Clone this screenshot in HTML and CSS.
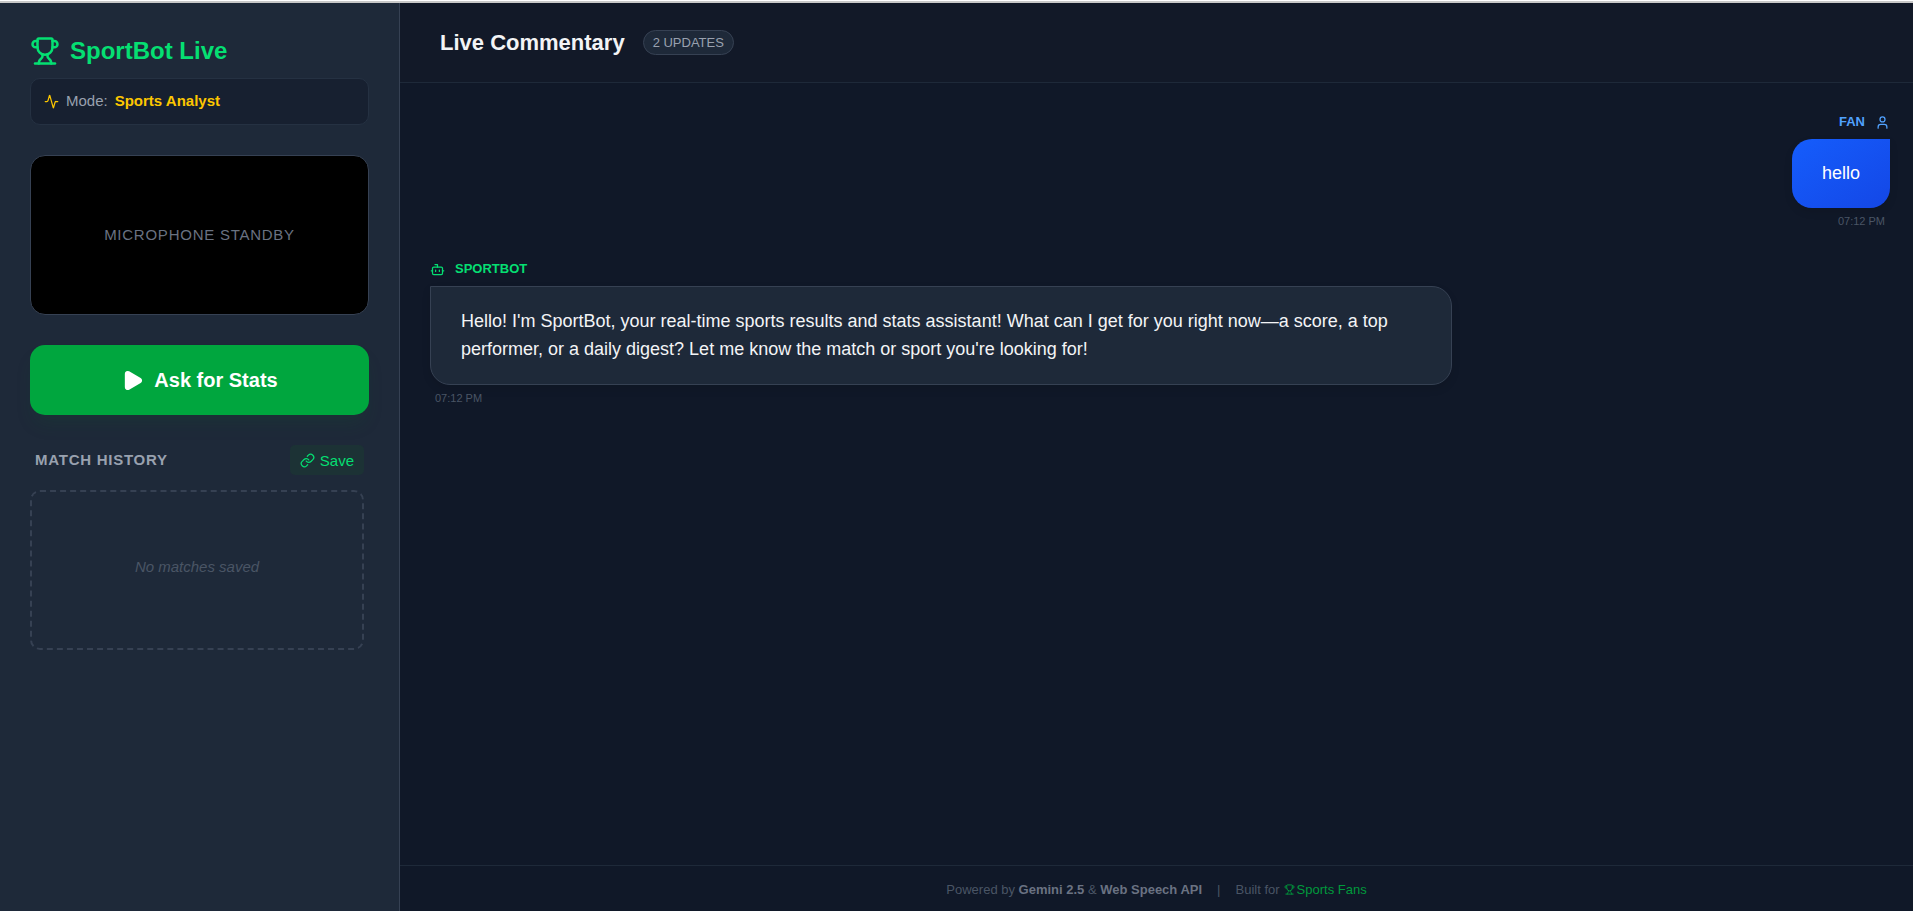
FILE: index.html
```html
<!DOCTYPE html>
<html lang="en">
<head>
    <meta charset="UTF-8" />
    <meta name="viewport" content="width=device-width, initial-scale=1.0" />
    <title>SportBot Live</title>
    <link rel="stylesheet" href="styles.css">
</head>
<body>
<svg class="sprite" aria-hidden="true">
    <symbol id="trophy" viewBox="0 0 24 24">
        <path d="M10 14.66v1.626a2 2 0 0 1-.976 1.696A5 5 0 0 0 7 21.978" />
        <path d="M14 14.66v1.626a2 2 0 0 0 .976 1.696A5 5 0 0 1 17 21.978" />
        <path d="M18 9h1.5a1 1 0 0 0 0-5H18" />
        <path d="M4 22h16" />
        <path d="M6 9a6 6 0 0 0 12 0V3a1 1 0 0 0-1-1H7a1 1 0 0 0-1 1z" />
        <path d="M6 9H4.5a1 1 0 0 1 0-5H6" />
    </symbol>
</svg>
<div class="app">
    <aside class="sidebar">
        <div class="brand-block">
            <h1 class="brand">
                <svg class="icon icon-lg"><use href="#trophy" /></svg>
                SportBot Live
            </h1>
            <div class="mode">
                <svg class="icon mode-icon" viewBox="0 0 24 24"><path d="M22 12h-2.480a2 2 0 0 0-1.930 1.460l-2.350 8.360a.25.25 0 0 1-.48 0L9.240 2.180a.25.25 0 0 0-.48 0l-2.350 8.360A2 2 0 0 1 4.490 12H2" /></svg>
                <span>Mode:</span>
                <strong>Sports Analyst</strong>
            </div>
        </div>

        <div class="visualizer">Microphone standby</div>

        <button class="ask" type="button">
            <svg class="icon icon-play" viewBox="0 0 24 24"><path d="M5 5a2 2 0 0 1 3.008-1.728l11.997 6.998a2 2 0 0 1 .003 3.458l-12 7A2 2 0 0 1 5 19z" /></svg>
            Ask for Stats
        </button>

        <section class="history">
            <div class="history-header">
                <h2>Match History</h2>
                <button class="save" type="button">
                    <svg class="icon" viewBox="0 0 24 24">
                        <path d="M10 13a5 5 0 0 0 7.540.540l3-3a5 5 0 0 0-7.070-7.070l-1.720 1.710" />
                        <path d="M14 11a5 5 0 0 0-7.540-.540l-3 3a5 5 0 0 0 7.070 7.070l1.710-1.710" />
                    </svg>
                    Save
                </button>
            </div>
            <div class="history-empty">No matches saved</div>
        </section>
    </aside>

    <main class="main">
        <header class="header">
            <h2>Live Commentary</h2>
            <span class="badge">2 UPDATES</span>
        </header>

        <div class="messages">
            <div class="message fan">
                <div class="sender">
                    FAN
                    <svg class="icon" viewBox="0 0 24 24"><path d="M19 21v-2a4 4 0 0 0-4-4H9a4 4 0 0 0-4 4v2" /><circle cx="12" cy="7" r="4" /></svg>
                </div>
                <div class="bubble">hello</div>
                <time class="time">07:12 PM</time>
            </div>
            <div class="message bot">
                <div class="sender">
                    <svg class="icon" viewBox="0 0 24 24"><path d="M12 8V4H8" /><rect width="16" height="12" x="4" y="8" rx="2" /><path d="M2 14h2M20 14h2M15 13v2M9 13v2" /></svg>
                    SPORTBOT
                </div>
                <div class="bubble">Hello! I'm SportBot, your real-time sports results and stats assistant! What can I get for you right now—a score, a top performer, or a daily digest? Let me know the match or sport you're looking for!</div>
                <time class="time">07:12 PM</time>
            </div>
        </div>

        <footer class="footer">
            <span>Powered by <strong>Gemini 2.5</strong> &amp; <strong>Web Speech API</strong></span>
            <span class="divider">|</span>
            <span class="built">Built for <span class="fans"><svg class="icon"><use href="#trophy" /></svg>Sports Fans</span></span>
        </footer>
    </main>
</div>
</body>
</html>
```
FILE: styles.css
```css
* {
    box-sizing: border-box;
}
body {
    display: flex;
    flex-direction: column;
    height: 100vh;
    margin: 0;
    border-top: 1px solid #fff;
    font-family: "Liberation Sans", Arial, sans-serif;
    font-size: 15px;
    line-height: 20px;
    background-color: #101828;
    color: #f3f4f6;
}
h1, h2 {
    margin: 0;
}
button {
    border: 0;
    font-family: inherit;
    cursor: pointer;
}
.sprite {
    display: none;
}
.icon {
    width: 15px;
    height: 15px;
    flex-shrink: 0;
    fill: none;
    stroke: currentColor;
    stroke-width: 2;
    stroke-linecap: round;
    stroke-linejoin: round;
}
.app {
    display: flex;
    flex: 1;
    min-height: 0;
    border-top: 2px solid #c8c8c8;
}

/* Sidebar */
.sidebar {
    display: flex;
    flex-direction: column;
    gap: 30px;
    width: 400px;
    flex-shrink: 0;
    padding: 30px;
    background-color: #1e2939;
    border-right: 1px solid #364153;
}
.brand {
    display: flex;
    align-items: center;
    gap: 10px;
    height: 35px;
    margin-bottom: 10px;
    font-size: 24px;
    color: #05df72;
}
.icon-lg {
    width: 30px;
    height: 30px;
}
.mode {
    display: flex;
    align-items: center;
    gap: 7px;
    padding: 12px 13px 13px;
    border: 1px solid #253142;
    border-radius: 10px;
    background-color: #172030;
    color: #99a1af;
}
.mode strong,
.mode-icon {
    color: #fdc700;
}
.visualizer {
    display: flex;
    align-items: center;
    justify-content: center;
    height: 160px;
    border: 1px solid #364153;
    border-radius: 15px;
    background-color: #000;
    color: #6a7282;
    letter-spacing: 0.05em;
    text-transform: uppercase;
}
.ask {
    display: flex;
    align-items: center;
    justify-content: center;
    gap: 10px;
    height: 70px;
    border-radius: 15px;
    background-color: #00a63e;
    box-shadow: 0 12px 18px -4px rgba(13, 84, 43, 0.2);
    color: #fff;
    font-size: 20px;
    font-weight: bold;
}
.icon-play {
    width: 23px;
    height: 23px;
    fill: currentColor;
}
.history {
    padding-right: 5px;
}
.history-header {
    display: flex;
    align-items: center;
    justify-content: space-between;
    margin-bottom: 15px;
    padding-left: 5px;
}
.history-header h2 {
    font-size: 15px;
    color: #99a1af;
    letter-spacing: 0.05em;
    text-transform: uppercase;
}
.save {
    display: flex;
    align-items: center;
    gap: 5px;
    height: 30px;
    padding: 0 10px;
    border-radius: 5px;
    background-color: #1c3235;
    color: #05df72;
    font-size: 15px;
}
.history-empty {
    display: flex;
    align-items: center;
    justify-content: center;
    height: 160px;
    padding-bottom: 6px;
    border: 2px dashed #364153;
    border-radius: 10px;
    color: #4a5565;
    font-style: italic;
}

/* Commentary */
.main {
    display: flex;
    flex-direction: column;
    flex: 1;
    min-width: 0;
}
.header {
    display: flex;
    align-items: center;
    gap: 18px;
    height: 80px;
    padding: 0 40px;
    border-bottom: 1px solid #1e2939;
    background-color: #121928;
}
.header h2 {
    font-size: 22px;
}
.badge {
    padding: 1px 9px;
    border: 1px solid #364153;
    border-radius: 15px;
    background-color: #1e2939;
    color: #99a1af;
    font-size: 13px;
    line-height: 21px;
}
.messages {
    display: flex;
    flex-direction: column;
    flex: 1;
    gap: 30px;
    padding: 30px 23px 30px 30px;
    overflow-y: auto;
}
.message {
    display: flex;
    flex-direction: column;
    align-items: flex-start;
    max-width: 70%;
}
.message.fan {
    align-self: flex-end;
    align-items: flex-end;
}
.sender {
    display: flex;
    align-items: flex-end;
    gap: 10px;
    margin-bottom: 9px;
    font-size: 13px;
    font-weight: bold;
    line-height: 17px;
}
.fan .sender {
    color: #51a2ff;
}
.bot .sender {
    color: #05df72;
}
.bubble {
    padding: 20px 30px 21px;
    border-radius: 20px;
    font-size: 18px;
    line-height: 28px;
    box-shadow: 0 4px 8px rgba(0, 0, 0, 0.1);
}
.fan .bubble {
    border-top-right-radius: 0;
    background: linear-gradient(to bottom right, #155dfc, #1447e6);
    color: #fff;
}
.bot .bubble {
    border: 1px solid #364153;
    border-top-left-radius: 0;
    background-color: #1e2939;
}
.time {
    padding: 5px 5px 0;
    color: #4a5565;
    font-size: 11px;
    line-height: 17px;
}

/* Footer */
.footer {
    display: flex;
    align-items: center;
    justify-content: center;
    gap: 15px;
    height: 46px;
    padding-top: 2px;
    border-top: 1px solid #1e2939;
    color: #4a5565;
    font-size: 13px;
}
.footer strong {
    color: #6a7282;
}
.built,
.fans {
    display: flex;
    align-items: center;
}
.built {
    gap: 4px;
}
.fans {
    gap: 2px;
    color: #009a3c;
}
.fans .icon {
    width: 11px;
    height: 11px;
}
```
